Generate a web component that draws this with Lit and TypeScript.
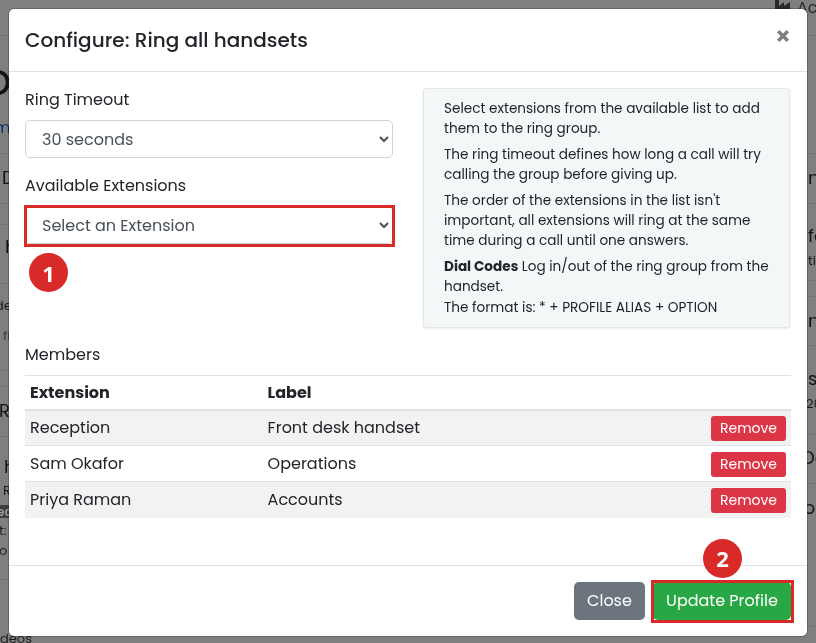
import { LitElement, html, css } from "lit";
import { customElement } from "lit/decorators.js";

type Line = { t: string; cls: string; x: number; y: number };
type Row = { h: number; lines?: Line[] };

const LEFT: Row[] = [
  { h: 36 },
  { h: 118, lines: [{ t: "O", cls: "big", x: -17, y: 27 }, { t: "m", cls: "link", x: -6, y: 15 }] },
  { h: 50, lines: [{ t: "D", cls: "mid", x: 2, y: 12 }] },
  { h: 21 },
  { h: 59, lines: [{ t: "h", cls: "mid", x: 5, y: 10 }] },
  { h: 87, lines: [{ t: "de", cls: "small", x: -5, y: 12 }, { t: "fi", cls: "small dim", x: 3, y: 10 }] },
  { h: 16 },
  { h: 50, lines: [{ t: "Re", cls: "mid", x: -1, y: 12 }] },
  {
    h: 143,
    lines: [
      { t: "h", cls: "mid", x: 4, y: 18 },
      { t: "R", cls: "small", x: 3, y: 2 },
      { t: "ec", cls: "badge", x: 0, y: 4 },
      { t: "t:", cls: "small", x: -1, y: 3 },
      { t: "o", cls: "small", x: -1, y: 0 },
    ],
  },
  { h: 63, lines: [{ t: "deos", cls: "small", x: 0, y: 49 }] },
];
const RIGHT: Row[] = [
  { h: 36 },
  { h: 118 },
  { h: 50, lines: [{ t: "ne", cls: "mid", x: 0, y: 12 }] },
  { h: 77, lines: [{ t: "fo", cls: "mid", x: 0, y: 20 }, { t: "tin", cls: "small", x: 0, y: 3 }] },
  { h: 16 },
  { h: 49, lines: [{ t: "ne", cls: "mid", x: 0, y: 12 }] },
  { h: 89, lines: [{ t: "st", cls: "mid", x: 0, y: 21 }, { t: "26", cls: "small", x: -2, y: 3 }] },
  { h: 49, lines: [{ t: "Do", cls: "mid", x: -6, y: 11 }] },
  { h: 143, lines: [{ t: "pe", cls: "mid", x: -5, y: 12 }] },
  { h: 17 },
];
const MEMBERS = [
  ["Reception", "Front desk handset"],
  ["Sam Okafor", "Operations"],
  ["Priya Raman", "Accounts"],
];

@customElement("app-root")
export class AppRoot extends LitElement {
  static styles = css`
    :host {
      display: block;
      position: relative;
      width: 816px;
      height: 643px;
      overflow: hidden;
      background: #7f7f7f;
      font-family: Poppins, Inter, "Noto Sans", sans-serif;
      color: #212529;
      font-size: 16px;
    }
    * { box-sizing: border-box; }
    .page { display: flex; justify-content: space-between; height: 643px; will-change: transform; }
    .strip { width: 32px; display: flex; flex-direction: column; overflow: hidden; }
    .bgrow { border-bottom: 1px solid #727272; white-space: nowrap; color: #141414; flex: none; }
    .bgrow:last-child { border-bottom: 0; }
    .ln { display: block; height: 20px; line-height: 20px; }
    .big { font-size: 36px; font-weight: 500; height: 40px; line-height: 40px; }
    .link { color: #05336a; }
    .mid { font-size: 18px; height: 24px; line-height: 24px; }
    .small { font-size: 13px; color: #1c1c1c; }
    .dim { color: #3c3c3c; }
    .badge { font-size: 12px; font-weight: 600; height: 13px; line-height: 13px; background: #3a3e42; color: #9a9a9a; width: 60px; text-indent: -3px; }
    .right .ln { padding-left: 24px; }
    .overlay { position: absolute; inset: 0; padding: 8px; will-change: transform; }
    .topnote { position: absolute; top: -5px; left: 775px; font-size: 16px; color: #2a2a2a; white-space: nowrap; display: flex; align-items: flex-start; gap: 6px; }
    .topnote svg { display: block; margin-top: 5px; }
    .modal {
      width: 800px; height: 629px; background: #fff; border-radius: 6px;
      border: 1px solid rgba(0,0,0,.2); background-clip: padding-box;
      display: flex; flex-direction: column; position: relative;
    }
    header { height: 63px; flex: none; border-bottom: 1px solid #dee2e6; display: flex; align-items: center; justify-content: space-between; padding: 0 18px 0 16px; }
    h5 { margin: 0; font-size: 20px; font-weight: 500; line-height: 1.5; }
    .close { border: 0; background: none; padding: 0; width: 12px; height: 12px; display: block; margin-top: -8px; }
    .close svg { display: block; }
    .body { flex: 1; padding: 16px 16px 0; }
    .cols { display: flex; justify-content: space-between; align-items: flex-start; height: 255px; }
    .form { width: 368px; }
    .lbl { display: block; line-height: 24px; margin-bottom: 8px; }
    .lbl.second { margin-top: 16px; }
    .field { position: relative; }
    select {
      display: block; width: 368px; height: 38px; padding: 6px 12px; font: inherit; color: #495057;
      background: #fff; border: 1px solid #ced4da; border-radius: 5px;
    }
    .box { position: absolute; border: 3px solid #d92a2a; pointer-events: none; }
    .box.sel { left: -1px; top: -1px; width: 371px; height: 42px; }
    .dot {
      position: absolute; width: 39px; height: 39px; border-radius: 50%; background: #d92a2a; color: #fff;
      display: flex; align-items: center; justify-content: center; font: 700 22px "Open Sans", sans-serif;
    }
    .dot.one { left: 4px; top: 47px; }
    .dot.two { left: 50px; top: -43px; }
    .info {
      width: 367px; margin-right: 1px; padding: 10px 19px 9px 20px; background: #f4f7f7; border: 1px solid #e3e6e6; border-radius: 3px;
      box-shadow: 0 1px 2px rgba(0,0,0,.08); font-size: 13.6px; line-height: 20.4px;
    }
    .info p { margin: 0 0 5px; }
    .info p:last-child { margin: 0; }
    .fmt { display: block; }
    .members { line-height: 24px; margin-bottom: 8px; }
    table { width: 766px; border-collapse: collapse; table-layout: fixed; border-top: 1px solid #dee2e6; }
    th { text-align: left; font-weight: 700; height: 34px; padding: 0 5px; border-bottom: 2px solid #dee2e6; }
    td { height: 36px; padding: 0 5px; border-bottom: 1px solid #dee2e6; }
    tr:last-child td { border-bottom: 0; height: 36px; }
    tbody tr:nth-child(odd) { background: #f2f2f2; }
    .c1 { width: 237.6px; }
    .c3 { width: 90px; text-align: right; }
    td.c3 { vertical-align: top; padding-top: 5px; }
    tr + tr td.c3 { padding-top: 6px; }
    .rm {
      display: block; margin-left: auto; width: 75px; height: 25px; border: 0; border-radius: 3px; background: #dc3545; color: #fff;
      font: inherit; font-size: 14px; line-height: 25px; padding: 0;
    }
    footer { height: 71px; flex: none; border-top: 1px solid #dee2e6; display: flex; justify-content: flex-end; align-items: center; gap: 8px; padding: 0 16px 1px 0; }
    .btn { height: 38px; border: 0; font: inherit; color: #fff; border-radius: 5px; padding: 0; }
    .grey { width: 71px; background: #6c757d; }
    .wrapgreen { position: relative; }
    .green { width: 138px; background: #28a745; display: block; }
    .box.btnbox { left: -2px; top: -2px; width: 143px; height: 43px; }
  `;

  private strip(rows: Row[], side: string) {
    return html`<div class="strip ${side}">
      ${rows.map(
        (r) => html`<div class="bgrow" style="height:${r.h}px">
          ${(r.lines ?? []).map(
            (l) => html`<span class="ln ${l.cls}" style="margin-left:${l.x}px;margin-top:${l.y}px">${l.t}</span>`
          )}
        </div>`
      )}
    </div>`;
  }

  render() {
    return html`
      <div class="page">${this.strip(LEFT, "left")}${this.strip(RIGHT, "right")}</div>
      <div class="topnote">
        <svg width="16" height="10" viewBox="0 0 16 10"><path d="M0 0H4V6L9 2V6L15 2V10H0Z" fill="#2a2a2a"/></svg>
        <span>Ac</span>
      </div>
      <div class="overlay">
        <div class="modal">
          <header>
            <h5>Configure: Ring all handsets</h5>
            <button class="close" aria-label="Close">
              <svg width="12" height="12" viewBox="0 0 12 12"><path d="M1.2 1.2 10.8 10.8M10.8 1.2 1.2 10.8" stroke="#7f7f7f" stroke-width="3.4" fill="none"/></svg>
            </button>
          </header>
          <div class="body">
            <div class="cols">
              <div class="form">
                <label class="lbl">Ring Timeout</label>
                <select><option>30 seconds</option></select>
                <label class="lbl second">Available Extensions</label>
                <div class="field">
                  <select><option>Select an Extension</option></select>
                  <div class="box sel"></div>
                  <div class="dot one">1</div>
                </div>
              </div>
              <div class="info">
                <p>Select extensions from the available list to add them to the ring group.</p>
                <p>The ring timeout defines how long a call will try calling the group before giving up.</p>
                <p>The order of the extensions in the list isn't important, all extensions will ring at the same time during a call until one answers.</p>
                <p><b>Dial Codes</b> Log in/out of the ring group from the handset.<span class="fmt">The format is: * + PROFILE ALIAS + OPTION</span></p>
              </div>
            </div>
            <div class="members">Members</div>
            <table>
              <thead><tr><th class="c1">Extension</th><th>Label</th><th class="c3"></th></tr></thead>
              <tbody>
                ${MEMBERS.map(
                  ([a, b]) => html`<tr><td>${a}</td><td>${b}</td><td class="c3"><button class="rm">Remove</button></td></tr>`
                )}
              </tbody>
            </table>
          </div>
          <footer>
            <button class="btn grey">Close</button>
            <div class="wrapgreen">
              <button class="btn green">Update Profile</button>
              <div class="box btnbox"></div>
              <div class="dot two">2</div>
            </div>
          </footer>
        </div>
      </div>
    `;
  }
}
